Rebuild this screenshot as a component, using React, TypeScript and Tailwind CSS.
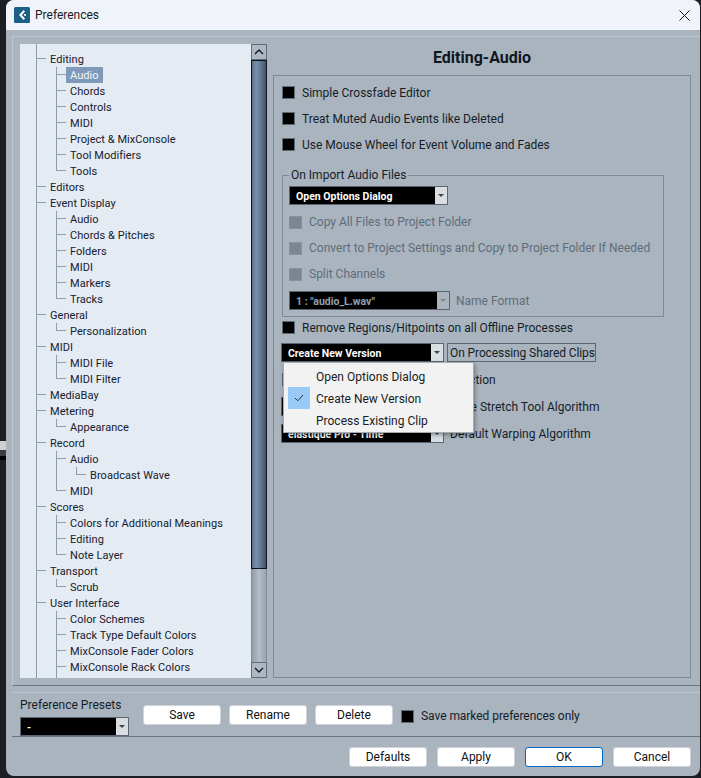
import React from "react";

type Node = { t: string; l: 1 | 2 | 3; last?: boolean; sub?: boolean; sel?: boolean };

const rows: Node[] = [
  { t: "Editing", l: 1 },
  { t: "Audio", l: 2, sel: true },
  { t: "Chords", l: 2 },
  { t: "Controls", l: 2 },
  { t: "MIDI", l: 2 },
  { t: "Project & MixConsole", l: 2 },
  { t: "Tool Modifiers", l: 2 },
  { t: "Tools", l: 2, last: true },
  { t: "Editors", l: 1 },
  { t: "Event Display", l: 1 },
  { t: "Audio", l: 2 },
  { t: "Chords & Pitches", l: 2 },
  { t: "Folders", l: 2 },
  { t: "MIDI", l: 2 },
  { t: "Markers", l: 2 },
  { t: "Tracks", l: 2, last: true },
  { t: "General", l: 1 },
  { t: "Personalization", l: 2, last: true },
  { t: "MIDI", l: 1 },
  { t: "MIDI File", l: 2 },
  { t: "MIDI Filter", l: 2, last: true },
  { t: "MediaBay", l: 1 },
  { t: "Metering", l: 1 },
  { t: "Appearance", l: 2, last: true },
  { t: "Record", l: 1 },
  { t: "Audio", l: 2 },
  { t: "Broadcast Wave", l: 3, last: true },
  { t: "MIDI", l: 2, last: true },
  { t: "Scores", l: 1 },
  { t: "Colors for Additional Meanings", l: 2 },
  { t: "Editing", l: 2 },
  { t: "Note Layer", l: 2, last: true },
  { t: "Transport", l: 1 },
  { t: "Scrub", l: 2, last: true },
  { t: "User Interface", l: 1 },
  { t: "Color Schemes", l: 2 },
  { t: "Track Type Default Colors", l: 2 },
  { t: "MixConsole Fader Colors", l: 2 },
  { t: "MixConsole Rack Colors", l: 2 },
];

function Pass() {
  return <div className="h-4 w-5 shrink-0 border-l border-[#8f9dab]" />;
}

function Tick({ half }: { half?: boolean }) {
  return (
    <div className="h-4 w-[14px] shrink-0">
      <div className="h-2 w-[10px] border-b border-l border-[#8f9dab]" />
      {!half && <div className="h-2 border-l border-[#8f9dab]" />}
    </div>
  );
}

function TreeRow({ n }: { n: Node }) {
  return (
    <div className="flex h-4 shrink-0 items-start">
      {n.l === 1 && <Tick />}
      {n.l === 2 && (
        <>
          <Pass />
          <Tick half={n.last} />
        </>
      )}
      {n.l === 3 && (
        <>
          <Pass />
          <Pass />
          <Tick half={n.last} />
        </>
      )}
      <span
        className={
          n.sel
            ? "-ml-[4px] h-4 bg-[#7f9ab8] px-[4px] leading-[18px] text-[#f2f5f8]"
            : "h-4 leading-[18px] text-[#16202e]"
        }
      >
        {n.t}
      </span>
    </div>
  );
}

function Tree() {
  return (
    <div className="h-[634px] w-[231px] shrink-0 overflow-hidden bg-[#e4ebf3] pl-4 text-[11px] tracking-[0.05px]">
      <div className="h-[7px] w-5 border-l border-[#8f9dab]" />
      {rows.map((n, i) => (
        <TreeRow key={i} n={n} />
      ))}
      <div className="flex h-[3px]">
        <div className="w-5 border-l border-[#8f9dab]" />
        <div className="w-5 border-l border-[#8f9dab]" />
      </div>
    </div>
  );
}

function Scrollbar() {
  return (
    <div className="flex h-[634px] w-4 shrink-0 flex-col">
      <div className="flex h-4 w-4 shrink-0 items-center justify-center border border-[#5f6b78] bg-[#adb8c3]">
        <svg width="10" height="6" viewBox="0 0 10 6" fill="none" stroke="#10161d" strokeWidth="1.3">
          <path d="M1 5 L5 1 L9 5" />
        </svg>
      </div>
      <div className="h-[509px] shrink-0 border border-[#11151a] bg-[linear-gradient(to_right,#5a6f87,#7b90a8_30%,#5d7690_65%,#3e5168)]" />
      <div className="min-h-0 flex-1 border-x border-[#7f8c99] bg-[linear-gradient(to_right,#8f9ca8,#b3bdc7_50%,#98a4b0)]" />
      <div className="flex h-4 w-4 shrink-0 items-center justify-center border border-[#5f6b78] bg-[#adb8c3]">
        <svg width="10" height="6" viewBox="0 0 10 6" fill="none" stroke="#10161d" strokeWidth="1.3">
          <path d="M1 1 L5 5 L9 1" />
        </svg>
      </div>
    </div>
  );
}

function Box({ disabled }: { disabled?: boolean }) {
  return (
    <div
      className={
        disabled
          ? "h-[13px] w-[13px] shrink-0 border border-[#87929d] bg-[#7b8692]"
          : "h-[13px] w-[13px] shrink-0 border border-[#5f6a75] bg-black"
      }
    />
  );
}

function Check({ label, disabled }: { label: string; disabled?: boolean }) {
  return (
    <div className="flex h-[26px] items-center gap-[7px]">
      <Box disabled={disabled} />
      <span className={disabled ? "whitespace-nowrap text-[#5f6c7a]" : "whitespace-nowrap pt-px text-[#151d28]"}>{label}</span>
    </div>
  );
}

function Select({ text, w, disabled }: { text: string; w: string; disabled?: boolean }) {
  return (
    <div className={`flex h-[19px] shrink-0 border border-[#5b6672] bg-black ${w}`}>
      <span
        className={
          disabled
            ? "min-w-0 flex-1 overflow-hidden whitespace-nowrap pl-[6px] text-[10.5px] leading-[19px] font-bold text-[#8fa0b0]"
            : "min-w-0 flex-1 overflow-hidden whitespace-nowrap pl-[6px] text-[10.5px] leading-[19px] font-bold text-white"
        }
      >
        {text}
      </span>
      <div
        className={
          disabled
            ? "flex w-[12px] shrink-0 items-center justify-center bg-[#aab4be]"
            : "flex w-[12px] shrink-0 items-center justify-center bg-[#d9dee3]"
        }
      >
        <svg width="6" height="3" viewBox="0 0 6 3">
          <path d="M0 0 H6 L3 3 Z" fill={disabled ? "#7c8792" : "#3a4450"} />
        </svg>
      </div>
    </div>
  );
}

function Menu() {
  const items = ["Open Options Dialog", "Create New Version", "Process Existing Clip"];
  return (
    <div className="absolute left-[2px] top-[19px] z-10 h-[71px] w-[191px] border border-[#a4abb2] bg-[#f2f2f2] py-[2px] pl-[4px] shadow-[1px_2px_4px_rgba(0,0,0,0.35)]">
      {items.map((t, i) => (
        <div key={t} className="flex h-[22px] items-center text-[12px] text-[#1c1c1c]">
          <div
            className={
              i === 1
                ? "flex h-[22px] w-[22px] shrink-0 items-center justify-center bg-[#99c9f7]"
                : "h-[22px] w-[22px] shrink-0"
            }
          >
            {i === 1 && (
              <svg width="10" height="8" viewBox="0 0 10 8" fill="none" stroke="#26323e" strokeWidth="1">
                <path d="M1 4 L3.8 6.8 L9 1" />
              </svg>
            )}
          </div>
          <span className="ml-[6px] pt-[2px]">{t}</span>
        </div>
      ))}
    </div>
  );
}

function Btn({ label, primary }: { label: string; primary?: boolean }) {
  return (
    <div
      className={
        primary
          ? "flex h-5 w-[78px] shrink-0 items-center justify-center rounded-[3px] border border-[#0067c0] bg-white text-[12px] text-[#111]"
          : "flex h-5 w-[78px] shrink-0 items-center justify-center rounded-[3px] border border-[#cfd4d9] bg-white text-[12px] text-[#111]"
      }
    >
      {label}
    </div>
  );
}

function EditorPanel() {
  return (
    <div className="h-[634px] w-[418px] shrink-0">
      <div className="flex h-[31px] items-center justify-center pb-[3px] text-[16px] font-bold text-[#10161e]">
        Editing-Audio
      </div>
      <div className="h-[603px] border border-[#7d8995] pl-2 pt-[3px] text-[12px]">
        <Check label="Simple Crossfade Editor" />
        <Check label="Treat Muted Audio Events like Deleted" />
        <Check label="Use Mouse Wheel for Event Volume and Fades" />
        <fieldset className="mt-[10px] w-[382px] border border-[#7d8995] pb-[6px] pl-[6px]">
          <legend className="h-4 px-[2px] leading-4 text-[#151d28]">On Import Audio Files</legend>
          <div className="mt-[3px]">
            <Select text="Open Options Dialog" w="w-[159px]" />
          </div>
          <div className="mt-[4px]">
            <Check label="Copy All Files to Project Folder" disabled />
            <Check label="Convert to Project Settings and Copy to Project Folder If Needed" disabled />
            <Check label="Split Channels" disabled />
          </div>
          <div className="mt-[4px] flex items-center gap-[6px]">
            <Select text={'1 : "audio_L.wav"'} w="w-[161px]" disabled />
            <span className="text-[#5f6c7a]">Name Format</span>
          </div>
        </fieldset>
        <div className="flex h-5 items-center gap-[7px]">
          <Box />
          <span className="pt-px text-[#151d28]">Remove Regions/Hitpoints on all Offline Processes</span>
        </div>
        <div className="relative mt-[6px] -ml-px flex items-center">
          <Select text="Create New Version" w="w-[163px]" />
          <div className="ml-[3px] flex h-[19px] w-[149px] items-center whitespace-nowrap border border-[#5b6672] px-[2px] tracking-[-0.1px] text-[#151d28]">
            On Processing Shared Clips
          </div>
          <Menu />
        </div>
        <div className="mt-[4px]">
          <Check label="Enable Automatic Hitpoint Detection" />
        </div>
        <div className="mt-[4px] -ml-px flex items-center gap-[6px]">
          <Select text="Standard - Solo" w="w-[163px]" />
          <span className="pt-[2px] text-[#151d28]">Time Stretch Tool Algorithm</span>
        </div>
        <div className="mt-[8px] -ml-px flex items-center gap-[6px]">
          <Select text="élastique Pro - Time" w="w-[163px]" />
          <span className="text-[#151d28]">Default Warping Algorithm</span>
        </div>
      </div>
    </div>
  );
}

export default function App() {
  return (
    <div className="flex h-[778px] w-[701px] overflow-hidden bg-[#1b1e23] font-['Roboto',sans-serif]">
      <div className="flex w-[6px] shrink-0 flex-col">
        <div className="h-[441px] shrink-0" />
        <div className="h-[9px] shrink-0 bg-[#cfcfcf]" />
        <div className="h-[6px] shrink-0 bg-[#3a3d42]" />
        <div className="h-[4px] shrink-0 bg-black" />
      </div>
      <div className="flex h-[776px] w-[694px] shrink-0 flex-col overflow-hidden rounded-lg bg-[#a9b4bf]">
        <div className="flex h-[30px] shrink-0 items-center bg-[#f0f3f9] pl-2 pr-[10px]">
          <svg width="16" height="16" viewBox="0 0 16 16" className="shrink-0">
            <rect width="16" height="16" rx="1.5" fill="#1d6087" />
            <path d="M9.5 3 L5 8 L9.5 13 L11 11.5 L7.8 8 L11 4.5 Z" fill="#ffffff" />
            <circle cx="11" cy="8" r="1.1" fill="#ffffff" />
          </svg>
          <span className="ml-[5px] flex-1 text-[12px] text-[#1b1b1b]">Preferences</span>
          <svg width="11" height="11" viewBox="0 0 11 11" fill="none" stroke="#111" strokeWidth="1" className="shrink-0">
            <path d="M0.5 0.5 L10.5 10.5 M10.5 0.5 L0.5 10.5" />
          </svg>
        </div>
        <div className="ml-[6px] mt-[6px] flex h-[650px] shrink-0 items-start border-b border-l border-t border-[#bcc6cf] border-b-[#6b7681] pl-[7px] pt-[7px]">
          <Tree />
          <Scrollbar />
          <div className="w-[6px] shrink-0" />
          <EditorPanel />
        </div>
        <div className="ml-[6px] mt-[6px] flex h-[45px] shrink-0 border-b border-t border-[#bcc6cf] border-b-[#6b7681] pl-2">
          <div className="w-[123px] shrink-0 text-[12px] leading-4 text-[#151d28]">
            <div className="mt-[4px]">Preference Presets</div>
            <div className="mt-[4px] w-[109px]">
              <Select text="-" w="w-[109px]" />
            </div>
          </div>
          <div className="mt-[12px] flex items-start gap-2">
            <Btn label="Save" />
            <Btn label="Rename" />
            <Btn label="Delete" />
            <div className="mt-[2px] flex items-center gap-[7px] text-[12px] tracking-[-0.05px] text-[#151d28]">
              <Box />
              <span>Save marked preferences only</span>
            </div>
          </div>
        </div>
        <div className="flex shrink-0 justify-end gap-[10px] pr-[9px] pt-[10px]">
          <Btn label="Defaults" />
          <Btn label="Apply" />
          <Btn label="OK" primary />
          <Btn label="Cancel" />
        </div>
      </div>
    </div>
  );
}
